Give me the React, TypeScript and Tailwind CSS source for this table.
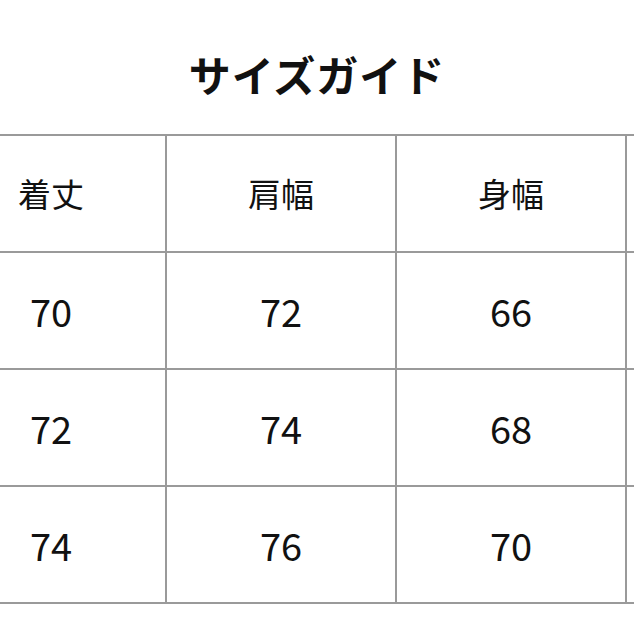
import React from 'react';

const headers = ['着丈', '肩幅', '身幅', ''];
const rows = [
  ['70', '72', '66', ''],
  ['72', '74', '68', ''],
  ['74', '76', '70', ''],
];

const font = { fontFamily: '"Noto Sans CJK JP", "Noto Sans", sans-serif' };

export default function App() {
  return (
    <div className="w-[634px] h-[634px] overflow-hidden bg-white text-[#111]" style={font}>
      <div className="h-[134px] pt-[52px] flex justify-center">
        <h1 className="text-[42px] leading-[44px] font-bold tracking-[1px]">サイズガイド</h1>
      </div>
      <div className="ml-[-65px] w-max grid grid-cols-[repeat(4,228px)] auto-rows-[115px] gap-[2px] p-[2px] bg-[#9a9a9a]">
        {headers.map((h, i) => (
          <div key={i} className="bg-white flex items-center justify-center text-[33px] leading-none">
            {h}
          </div>
        ))}
        {rows.flat().map((v, i) => (
          <div key={i} className="bg-white flex items-center justify-center text-[38px] leading-none">
            {v}
          </div>
        ))}
      </div>
    </div>
  );
}
